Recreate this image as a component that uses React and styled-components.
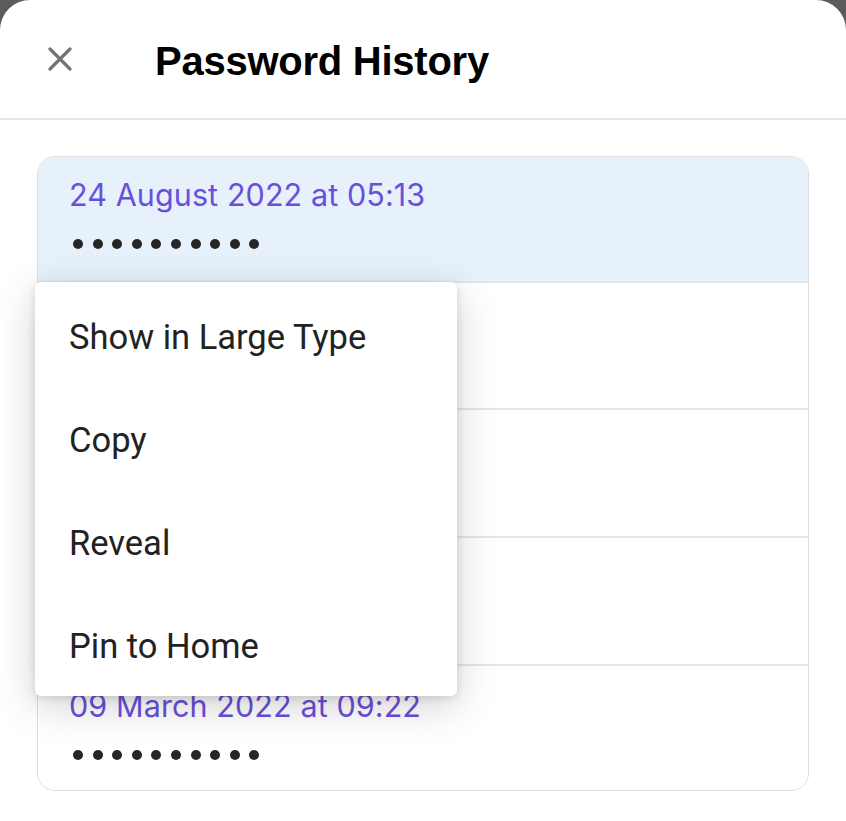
import React from "react";
import styled, { createGlobalStyle } from "styled-components";

const Global = createGlobalStyle`
  html, body { margin: 0; padding: 0; background: #5b5b5b; }
  body { font-family: "Inter", "Roboto", sans-serif; }
  * { box-sizing: border-box; }
`;

const Sheet = styled.div`
  width: 846px;
  height: 821px;
  background: #ffffff;
  border-radius: 30px 30px 0 0;
  overflow: hidden;
  display: flex;
  flex-direction: column;
`;

const Header = styled.header`
  height: 120px;
  flex: none;
  display: flex;
  align-items: center;
  border-bottom: 2px solid #e4e4e4;
  padding: 0 0 0 48px;
`;

const CloseButton = styled.button`
  width: 24px;
  height: 24px;
  padding: 0;
  border: 0;
  background: none;
  display: flex;
  margin-right: 83px;
`;

const Title = styled.h1`
  margin: 0;
  margin-top: 5px;
  font-family: "Liberation Sans", Arial, sans-serif;
  font-weight: 700;
  font-size: 40px;
  letter-spacing: -0.25px;
  color: #000;
`;

const Content = styled.main`
  position: relative;
  padding: 36px 37px 0 37px;
`;

const Card = styled.div`
  border: 1px solid #dedede;
  border-radius: 18px;
  overflow: hidden;
`;

const Row = styled.div`
  height: ${(p) => p.$h}px;
  background: ${(p) => (p.$active ? "#e7f1fc" : "#ffffff")};
  border-top: ${(p) => (p.$first ? "none" : "2px solid #e6e6e6")};
  padding: ${(p) => (p.$first ? 19 : 21)}px 0 0 31px;
  display: flex;
  flex-direction: column;
`;

const DateText = styled.div`
  font-family: "Inter", sans-serif;
  font-size: 30.5px;
  color: #6a4fdb;
  line-height: 38px;
  letter-spacing: 0.1px;
`;

const Dots = styled.div`
  display: flex;
  gap: 9.6px;
  margin-top: 25px;
  padding-left: 4px;
`;

const Dot = styled.span`
  width: 10px;
  height: 10px;
  border-radius: 50%;
  background: #262626;
`;

const Menu = styled.ul`
  position: absolute;
  left: 35px;
  top: 162px;
  width: 422px;
  margin: 0;
  padding: 2px 0 0;
  list-style: none;
  background: #ffffff;
  border-radius: 6px;
  box-shadow: 0 10px 40px rgba(0, 0, 0, 0.18), 0 2px 8px rgba(0, 0, 0, 0.12);
`;

const MenuItem = styled.li`
  height: 103px;
  display: flex;
  align-items: center;
  padding-left: 34px;
  padding-top: 2px;
  font-family: "Roboto", sans-serif;
  font-size: 34.5px;
  color: #222222;
`;

const entries = [
  { date: "24 August 2022 at 05:13", active: true, h: 124 },
  { date: "", h: 127 },
  { date: "", h: 128 },
  { date: "", h: 128 },
  { date: "09 March 2022 at 09:22", h: 126 },
];

const menuItems = ["Show in Large Type", "Copy", "Reveal", "Pin to Home"];

export default function App() {
  return (
    <>
      <Global />
      <Sheet>
        <Header>
          <CloseButton aria-label="Close">
            <svg width="24" height="24" viewBox="0 0 24 24">
              <path d="M2 2 L22 22 M22 2 L2 22" stroke="#747474" strokeWidth="3.2" strokeLinecap="round" />
            </svg>
          </CloseButton>
          <Title>Password History</Title>
        </Header>
        <Content>
          <Card>
            {entries.map((e, i) => (
              <Row key={i} $first={i === 0} $active={e.active} $h={e.h}>
                <DateText>{e.date || "\u00a0"}</DateText>
                <Dots aria-label="hidden password">
                  {Array.from({ length: 10 }).map((_, j) => (
                    <Dot key={j} />
                  ))}
                </Dots>
              </Row>
            ))}
          </Card>
          <Menu>
            {menuItems.map((m) => (
              <MenuItem key={m}>{m}</MenuItem>
            ))}
          </Menu>
        </Content>
      </Sheet>
    </>
  );
}
